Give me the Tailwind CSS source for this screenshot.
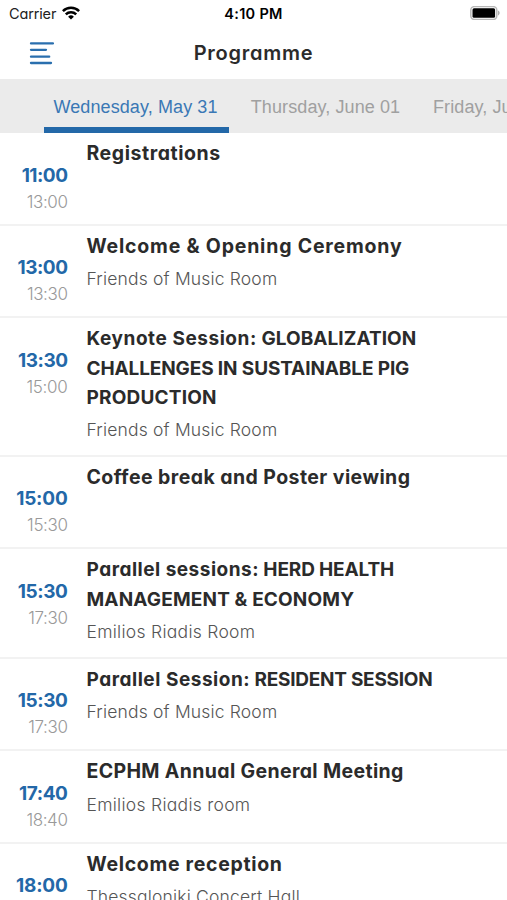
<!DOCTYPE html>
<html lang="en">
<head>
    <meta charset="UTF-8">
    <meta name="viewport" content="width=device-width, initial-scale=1.0">
    <title>Programme</title>
    <script src="https://cdn.jsdelivr.net/npm/@tailwindcss/browser@4"></script>
</head>
<body class="bg-white h-screen overflow-hidden font-['Inter',sans-serif] [font-feature-settings:'cv11']">
    <div class="flex flex-col h-[900px] overflow-hidden">
        <!-- Status bar -->
        <div class="h-7 shrink-0 grid grid-cols-3 items-center pl-[9px] pr-[7px] text-black">
            <div class="flex items-center gap-1.5 text-[14.5px] tracking-[-0.15px] text-[#222]">
                <span>Carrier</span>
                <svg class="w-[18px] h-3.5 -mt-0.5" viewBox="0 0 18 14" fill="none" stroke="#000" stroke-width="2.5">
                    <path d="M0.9 5.2a11.5 11.5 0 0 1 16.2 0"/>
                    <path d="M3.8 8.4a7.4 7.4 0 0 1 10.4 0"/>
                    <path d="M9 13.6l-2.9-2.9a4.1 4.1 0 0 1 5.8 0z" fill="#000" stroke="none"/>
                </svg>
            </div>
            <div class="-ml-0.5 text-center text-[14.5px] font-semibold tracking-[0.3px]">4:10 PM</div>
            <div class="flex justify-end -mt-0.5">
                <svg class="w-[30px] h-3.5" viewBox="0 0 30 14">
                    <rect x="0.8" y="0.6" width="26" height="12.8" rx="3.6" fill="#fff" stroke="#b8b8b8" stroke-width="1.5"/>
                    <rect x="2.5" y="2.3" width="22.6" height="9.4" rx="1.5" fill="#000"/>
                    <path d="M28 4.6c2.2 1 2.2 3.8 0 4.8z" fill="#b0b0b0"/>
                </svg>
            </div>
        </div>

        <!-- Header -->
        <header class="h-[51px] shrink-0 grid grid-cols-[80px_1fr_80px] items-center">
            <button class="pl-[29px]">
                <svg class="w-[25px] h-6 -mt-0.5" viewBox="0 0 25 24" fill="none" stroke="#2a6fae" stroke-width="2.3" stroke-linecap="round">
                    <path d="M2 2.4h22M2 8.8h15M2 15.7h18.2M2 22h20"/>
                </svg>
            </button>
            <h1 class="-mt-0.5 text-center text-[20px] font-semibold tracking-[0.75px] text-[#2b2b2b]">Programme</h1>
        </header>

        <!-- Day tabs -->
        <nav class="h-[54px] shrink-0 flex bg-[#ebebeb] pl-11 text-[18px] tracking-[0.1px] text-[#a0a0a0] whitespace-nowrap overflow-hidden font-['Liberation_Sans',sans-serif]">
            <a class="w-[185px] shrink-0 flex items-center justify-center border-b-6 border-[#2368a8] pt-2 pr-[2px] text-[#3a78b5]">Wednesday, May 31</a>
            <a class="w-[193px] shrink-0 flex items-center justify-center border-b-6 border-transparent pt-2">Thursday, June 01</a>
            <a class="shrink-0 flex items-center border-b-6 border-transparent pt-2 pl-[11px]">Friday, June 02</a>
        </nav>

        <!-- Sessions -->
        <ul class="text-[19px] leading-[29.3px] text-[#2b2b2b]">
            <li class="flex min-h-[92.7px] border-b-2 border-[#f2f2f2] pt-[6px]">
                <div class="w-[67.5px] shrink-0 pt-[22.5px] text-right leading-[27px]">
                    <p class="font-bold tracking-[-0.5px] text-[#2368a8]">11:00</p>
                    <p class="text-[17px] font-light tracking-[-0.4px] text-[#999]">13:00</p>
                </div>
                <div class="pl-[19px] pb-[10.2px]">
                    <h2 class="text-[19.5px] font-bold tracking-[0.55px]">Registrations</h2>
                </div>
            </li>
            <li class="flex min-h-[92.7px] border-b-2 border-[#f2f2f2] pt-[6px]">
                <div class="w-[67.5px] shrink-0 pt-[22.5px] text-right leading-[27px]">
                    <p class="font-bold tracking-[-0.5px] text-[#2368a8]">13:00</p>
                    <p class="text-[17px] font-light tracking-[-0.4px] text-[#999]">13:30</p>
                </div>
                <div class="pl-[19px] pb-[10.2px]">
                    <h2 class="text-[19.5px] font-bold tracking-[0.8px]">Welcome &amp; Opening Ceremony</h2>
                    <p class="mt-[3px] text-[17.5px] font-light tracking-[0.17px] text-[#555]">Friends of Music Room</p>
                </div>
            </li>
            <li class="flex min-h-[92.7px] border-b-2 border-[#f2f2f2] pt-[6px]">
                <div class="w-[67.5px] shrink-0 pt-[22.5px] text-right leading-[27px]">
                    <p class="font-bold tracking-[-0.5px] text-[#2368a8]">13:30</p>
                    <p class="text-[17px] font-light tracking-[-0.3px] text-[#999]">15:00</p>
                </div>
                <div class="pl-[19px] pb-[10.2px]">
                    <h2 class="font-bold tracking-[0.05px]"><span class="tracking-[0.56px]">Keynote Session:</span> GLOBALIZATION<br><span class="tracking-[-0.12px]">CHALLENGES IN SUSTAINABLE PIG</span><br><span class="tracking-[0.2px]">PRODUCTION</span></h2>
                    <p class="mt-[3px] text-[17.5px] font-light tracking-[0.17px] text-[#555]">Friends of Music Room</p>
                </div>
            </li>
            <li class="flex min-h-[92.7px] border-b-2 border-[#f2f2f2] pt-[6px]">
                <div class="w-[67.5px] shrink-0 pt-[22.5px] text-right leading-[27px]">
                    <p class="font-bold tracking-[-0.2px] text-[#2368a8]">15:00</p>
                    <p class="text-[17px] font-light tracking-[-0.4px] text-[#999]">15:30</p>
                </div>
                <div class="pl-[19px] pb-[10.2px]">
                    <h2 class="text-[19.5px] font-bold tracking-[0.43px]">Coffee break and Poster viewing</h2>
                </div>
            </li>
            <li class="flex min-h-[92.7px] border-b-2 border-[#f2f2f2] pt-[6px]">
                <div class="w-[67.5px] shrink-0 pt-[22.5px] text-right leading-[27px]">
                    <p class="font-bold tracking-[-0.4px] text-[#2368a8]">15:30</p>
                    <p class="text-[17px] font-light tracking-[-0.4px] text-[#999]">17:30</p>
                </div>
                <div class="pl-[19px] pb-[10.2px]">
                    <h2 class="font-bold tracking-[-0.15px]"><span class="tracking-[0.5px]">Parallel sessions:</span> HERD HEALTH<br><span class="tracking-[0.15px]">MANAGEMENT &amp; ECONOMY</span></h2>
                    <p class="mt-[3px] text-[17.5px] font-light tracking-[0.28px] text-[#555]">Emilios Riadis Room</p>
                </div>
            </li>
            <li class="flex min-h-[92.7px] border-b-2 border-[#f2f2f2] pt-[6px]">
                <div class="w-[67.5px] shrink-0 pt-[22.5px] text-right leading-[27px]">
                    <p class="font-bold tracking-[-0.4px] text-[#2368a8]">15:30</p>
                    <p class="text-[17px] font-light tracking-[-0.4px] text-[#999]">17:30</p>
                </div>
                <div class="pl-[19px] pb-[10.2px]">
                    <h2 class="font-bold tracking-[-0.25px]"><span class="tracking-[0.53px]">Parallel Session:</span> RESIDENT SESSION</h2>
                    <p class="mt-[3px] text-[17.5px] font-light tracking-[0.17px] text-[#555]">Friends of Music Room</p>
                </div>
            </li>
            <li class="flex min-h-[92.7px] border-b-2 border-[#f2f2f2] pt-[6px]">
                <div class="w-[67.5px] shrink-0 pt-[22.5px] text-right leading-[27px]">
                    <p class="font-bold tracking-[-0.4px] text-[#2368a8]">17:40</p>
                    <p class="text-[17px] font-light tracking-[-0.4px] text-[#999]">18:40</p>
                </div>
                <div class="pl-[19px] pb-[10.2px]">
                    <h2 class="text-[19.5px] font-bold tracking-[0.35px]">ECPHM Annual General Meeting</h2>
                    <p class="mt-[3px] text-[17.5px] font-light tracking-[0.28px] text-[#555]">Emilios Riadis room</p>
                </div>
            </li>
            <li class="flex min-h-[92.7px] border-b-2 border-[#f2f2f2] pt-[6px]">
                <div class="w-[67.5px] shrink-0 pt-[22.5px] text-right leading-[27px]">
                    <p class="font-bold tracking-[-0.2px] text-[#2368a8]">18:00</p>
                </div>
                <div class="pl-[19px] pb-[10.2px]">
                    <h2 class="text-[19.5px] font-bold tracking-[0.68px]">Welcome reception</h2>
                    <p class="mt-[3px] text-[17.5px] font-light tracking-[0.18px] text-[#555]">Thessaloniki Concert Hall</p>
                </div>
            </li>
        </ul>
    </div>
</body>
</html>
